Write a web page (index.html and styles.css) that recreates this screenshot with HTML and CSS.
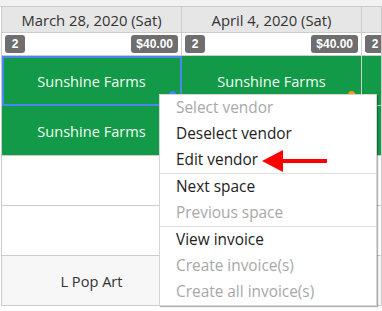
FILE: index.html
```html
<!DOCTYPE html>
<html lang="en">
<head>
    <meta charset="UTF-8">
    <title>Market schedule</title>
    <link rel="stylesheet" href="styles.css">
</head>
<body>

    <div class="topbar"></div>

    <div class="grid">
        <!-- Dates -->
        <div class="row header-row">
            <div class="cell">March 28, 2020 (Sat)</div>
            <div class="cell">April 4, 2020 (Sat)</div>
            <div class="cell last"></div>
        </div>

        <!-- Totaux -->
        <div class="row badge-row">
            <div class="cell"><span class="badge">2</span><span class="badge">$40.00</span></div>
            <div class="cell"><span class="badge">2</span><span class="badge">$40.00</span></div>
            <div class="cell last"><span class="badge">2</span></div>
        </div>

        <!-- Espaces -->
        <div class="row">
            <div class="cell booked selected">Sunshine Farms<span class="dot dot-blue"></span></div>
            <div class="cell booked">Sunshine Farms<span class="dot dot-orange"></span></div>
            <div class="cell last booked"></div>
        </div>
        <div class="row">
            <div class="cell booked">Sunshine Farms</div>
            <div class="cell booked"></div>
            <div class="cell last booked"></div>
        </div>
        <div class="row">
            <div class="cell"></div>
            <div class="cell"></div>
            <div class="cell last"></div>
        </div>
        <div class="row">
            <div class="cell"></div>
            <div class="cell"></div>
            <div class="cell last"></div>
        </div>
        <div class="row shaded">
            <div class="cell">L Pop Art</div>
            <div class="cell"></div>
            <div class="cell last"></div>
        </div>
    </div>

    <!-- Menu contextuel -->
    <ul class="context-menu">
        <li class="disabled">Select vendor</li>
        <li>Deselect vendor</li>
        <li>Edit vendor</li>
        <li class="divider"></li>
        <li>Next space</li>
        <li class="disabled">Previous space</li>
        <li class="divider"></li>
        <li>View invoice</li>
        <li class="disabled">Create invoice(s)</li>
        <li class="disabled">Create all invoice(s)</li>
    </ul>

    <svg class="arrow" width="68" height="24" viewBox="0 0 68 24">
        <polygon points="0,12 21,1 21,23" fill="#ff0000"/>
        <rect x="20" y="10" width="45" height="4" fill="#ff0000"/>
    </svg>

</body>
</html>
```

FILE: styles.css
```css
body {
    margin: 0;
    background-color: white;
    font-family: 'Open Sans', sans-serif;
    color: #333333;
    overflow: hidden;
    height: 311px;
    position: relative;
}

.topbar {
    height: 6px;
    background-color: #f2f2f2;
    border-bottom: 1px solid #cccccc;
}

.grid {
    margin-left: 1px;
    border-left: 1px solid #cccccc;
    overflow: hidden;
}

.row {
    display: flex;
    height: 50px;
}

.cell {
    position: relative;
    box-sizing: border-box;
    flex: 0 0 180px;
    border-right: 1px solid #cccccc;
    border-bottom: 1px solid #cccccc;
    display: flex;
    align-items: center;
    justify-content: center;
    font-size: 14.6px;
    white-space: nowrap;
}

.cell.last {
    flex: 1 1 auto;
    min-width: 0;
    overflow: hidden;
}

.header-row {
    height: 26px;
}

.header-row .cell {
    background-color: #e6e6e6;
    color: #333333;
    padding-top: 1px;
    font-size: 14.8px;
}

.badge-row {
    height: 23px;
}

.badge-row .cell {
    justify-content: space-between;
    align-items: flex-start;
    padding: 2px 3px 0 3px;
}

.badge {
    background-color: #6e6e6e;
    color: white;
    font-family: 'Liberation Sans', sans-serif;
    font-weight: bold;
    font-size: 12px;
    line-height: 18px;
    padding: 0 5px;
    min-width: 10px;
    text-align: center;
    border-radius: 3px;
}

.booked {
    background-color: #129a48;
    color: #f2fff4;
}

.selected {
    outline: 2px solid #4a86f0;
    outline-offset: -2px;
}

.shaded .cell {
    background-color: #f7f7f7;
}

.dot {
    position: absolute;
    width: 7px;
    height: 7px;
    border-radius: 50%;
    right: 5px;
    bottom: 7px;
}

.dot-blue {
    background-color: #4a86f0;
}

.dot-orange {
    background-color: #f39c12;
    right: 6px;
}

.context-menu {
    position: absolute;
    left: 159px;
    top: 94px;
    width: 216px;
    margin: 0;
    padding: 0;
    list-style: none;
    background-color: white;
    border: 1px solid #d6d6d6;
    box-shadow: 1px 1px 1px rgba(0, 0, 0, 0.3);
    font-size: 15.4px;
}

.context-menu li {
    height: 26px;
    line-height: 26px;
    padding-left: 16px;
    color: #222222;
}

.context-menu li.disabled {
    color: #a8a8a8;
}

.context-menu li.divider {
    height: 1px;
    background-color: #e2e2e2;
}

.arrow {
    position: absolute;
    left: 262px;
    top: 149px;
}
```
